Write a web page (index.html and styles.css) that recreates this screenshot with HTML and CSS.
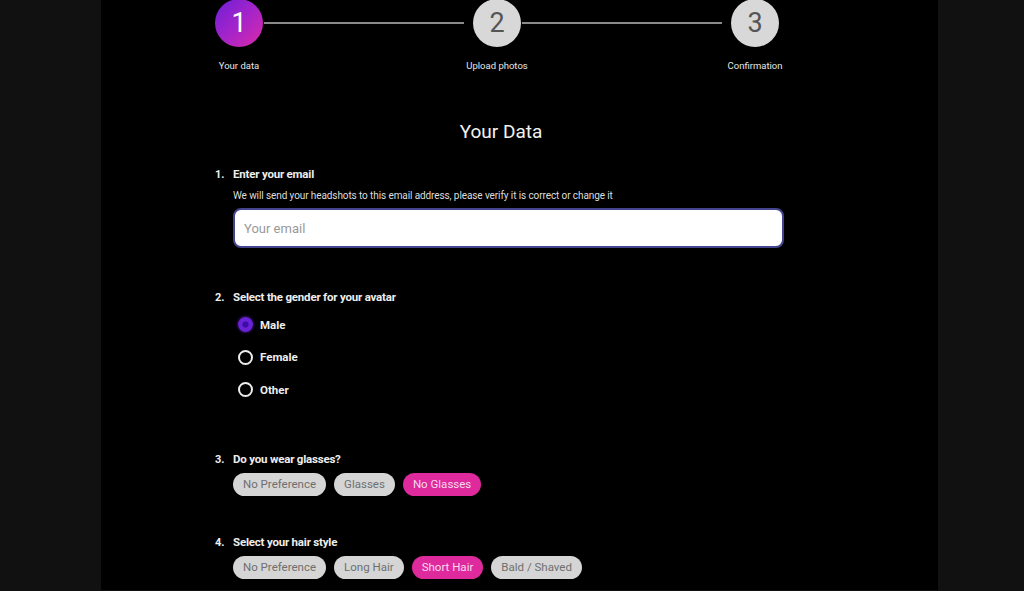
FILE: index.html
```html
<!DOCTYPE html>
<html lang="en">
<head>
    <meta charset="UTF-8">
    <meta name="viewport" content="width=device-width, initial-scale=1.0">
    <title>Your Data</title>
    <link rel="stylesheet" href="styles.css">
</head>
<body>
    <div class="panel">
        <div class="content">
            <div class="stepper">
                <div class="step">
                    <div class="circle active">1</div>
                    <div class="step-label">Your data</div>
                </div>
                <div class="line"></div>
                <div class="step">
                    <div class="circle">2</div>
                    <div class="step-label">Upload photos</div>
                </div>
                <div class="line"></div>
                <div class="step">
                    <div class="circle">3</div>
                    <div class="step-label">Confirmation</div>
                </div>
            </div>

            <h1 class="title">Your Data</h1>

            <form name="dataForm">
                <div class="question q-email">
                    <span class="num">1.</span>
                    <div class="body">
                        <div class="q-title">Enter your email</div>
                        <div class="q-sub">We will send your headshots to this email address, please verify it is correct or change it</div>
                        <input type="email" class="email" placeholder="Your email">
                    </div>
                </div>

                <div class="question q-gender">
                    <span class="num">2.</span>
                    <div class="body">
                        <div class="q-title">Select the gender for your avatar</div>
                        <ul class="radios">
                            <li><label><input type="radio" name="gender" value="male" checked>Male</label></li>
                            <li><label><input type="radio" name="gender" value="female">Female</label></li>
                            <li><label><input type="radio" name="gender" value="other">Other</label></li>
                        </ul>
                    </div>
                </div>

                <div class="question q-glasses">
                    <span class="num">3.</span>
                    <div class="body">
                        <div class="q-title">Do you wear glasses?</div>
                        <div class="chips">
                            <button type="button" class="chip">No Preference</button>
                            <button type="button" class="chip">Glasses</button>
                            <button type="button" class="chip selected">No Glasses</button>
                        </div>
                    </div>
                </div>

                <div class="question q-hair">
                    <span class="num">4.</span>
                    <div class="body">
                        <div class="q-title">Select your hair style</div>
                        <div class="chips">
                            <button type="button" class="chip">No Preference</button>
                            <button type="button" class="chip">Long Hair</button>
                            <button type="button" class="chip selected">Short Hair</button>
                            <button type="button" class="chip">Bald / Shaved</button>
                        </div>
                    </div>
                </div>
            </form>
        </div>
    </div>
</body>
</html>
```

FILE: styles.css
```css
body {
    margin: 0;
    background-color: #111;
    font-family: Roboto, "Liberation Sans", Arial, sans-serif;
    color: #eee;
    overflow: hidden;
}
.panel {
    width: 837px;
    margin-left: 101px;
    min-height: 591px;
    background-color: #000;
}
.content {
    width: 570px;
    padding-left: 114px;
}
.stepper {
    display: flex;
    align-items: flex-start;
    margin-top: -1px;
    padding-right: 6px;
}
.step {
    width: 48px;
    display: flex;
    flex-direction: column;
    align-items: center;
}
.circle {
    width: 48px;
    height: 48px;
    border-radius: 50%;
    background-color: #d8d8d8;
    color: #555;
    font-size: 27px;
    line-height: 48px;
    text-align: center;
}
.circle.active {
    background: linear-gradient(135deg, #6d1fd8 0%, #a424c9 50%, #dc2aa8 100%);
    color: #fff;
}
.step-label {
    margin-top: 13px;
    font-size: 9.5px;
    white-space: nowrap;
    color: #e6e6e6;
}
.line {
    flex: 1;
    height: 2px;
    margin: 23px 9px 0 1px;
    background-color: #8a8a8a;
}
.title {
    margin: 49px 0 0;
    font-size: 19px;
    font-weight: 400;
    text-align: center;
    color: #f2f2f2;
    padding-left: 2px;
}
.question {
    display: flex;
}
.num {
    width: 18px;
    font-size: 11px;
    font-weight: bold;
    line-height: 16px;
}
.body {
    flex: 1;
}
.q-title {
    font-size: 11.5px;
    font-weight: bold;
    line-height: 14px;
    letter-spacing: -0.2px;
}
.q-sub {
    margin-top: 9px;
    font-size: 10px;
    line-height: 12px;
    letter-spacing: -0.1px;
    color: #ddd;
}
.q-email {
    margin-top: 24px;
}
.email {
    display: block;
    box-sizing: border-box;
    width: 551px;
    height: 40px;
    margin-top: 6px;
    padding: 0 9px;
    border: 2px solid #45458f;
    border-radius: 8px;
    background-color: #fff;
    font-family: inherit;
    font-size: 13px;
    outline: none;
}
.email::placeholder {
    color: #999;
}
.q-gender {
    margin-top: 42px;
}
.radios {
    list-style: none;
    padding: 0;
    margin: 13px 0 0 4px;
}
.radios li {
    height: 32.5px;
}
.radios label {
    display: flex;
    align-items: center;
    font-size: 11.5px;
    font-weight: bold;
    line-height: 14px;
}
.radios input {
    appearance: none;
    width: 15px;
    height: 15px;
    margin: 0 7px 0 1px;
    border: 2px solid #eee;
    border-radius: 50%;
    box-sizing: border-box;
}
.radios input:checked {
    border-color: #6a22d6;
    background: radial-gradient(circle, #3d0ca8 0 35%, #6a22d6 45%);
    box-shadow: 0 0 3px #6a22d6;
}
.q-glasses {
    margin-top: 37px;
}
.q-hair {
    margin-top: 39px;
}
.chips {
    display: flex;
    gap: 8px;
    margin-top: 7px;
}
.chip {
    height: 23px;
    padding: 0 10px;
    border: none;
    border-radius: 12px;
    background-color: #d5d5d5;
    color: #6f6f6f;
    font-family: inherit;
    font-size: 11.5px;
}
.chip.selected {
    background-color: #de2a9c;
    color: #f7d9ee;
}
```
